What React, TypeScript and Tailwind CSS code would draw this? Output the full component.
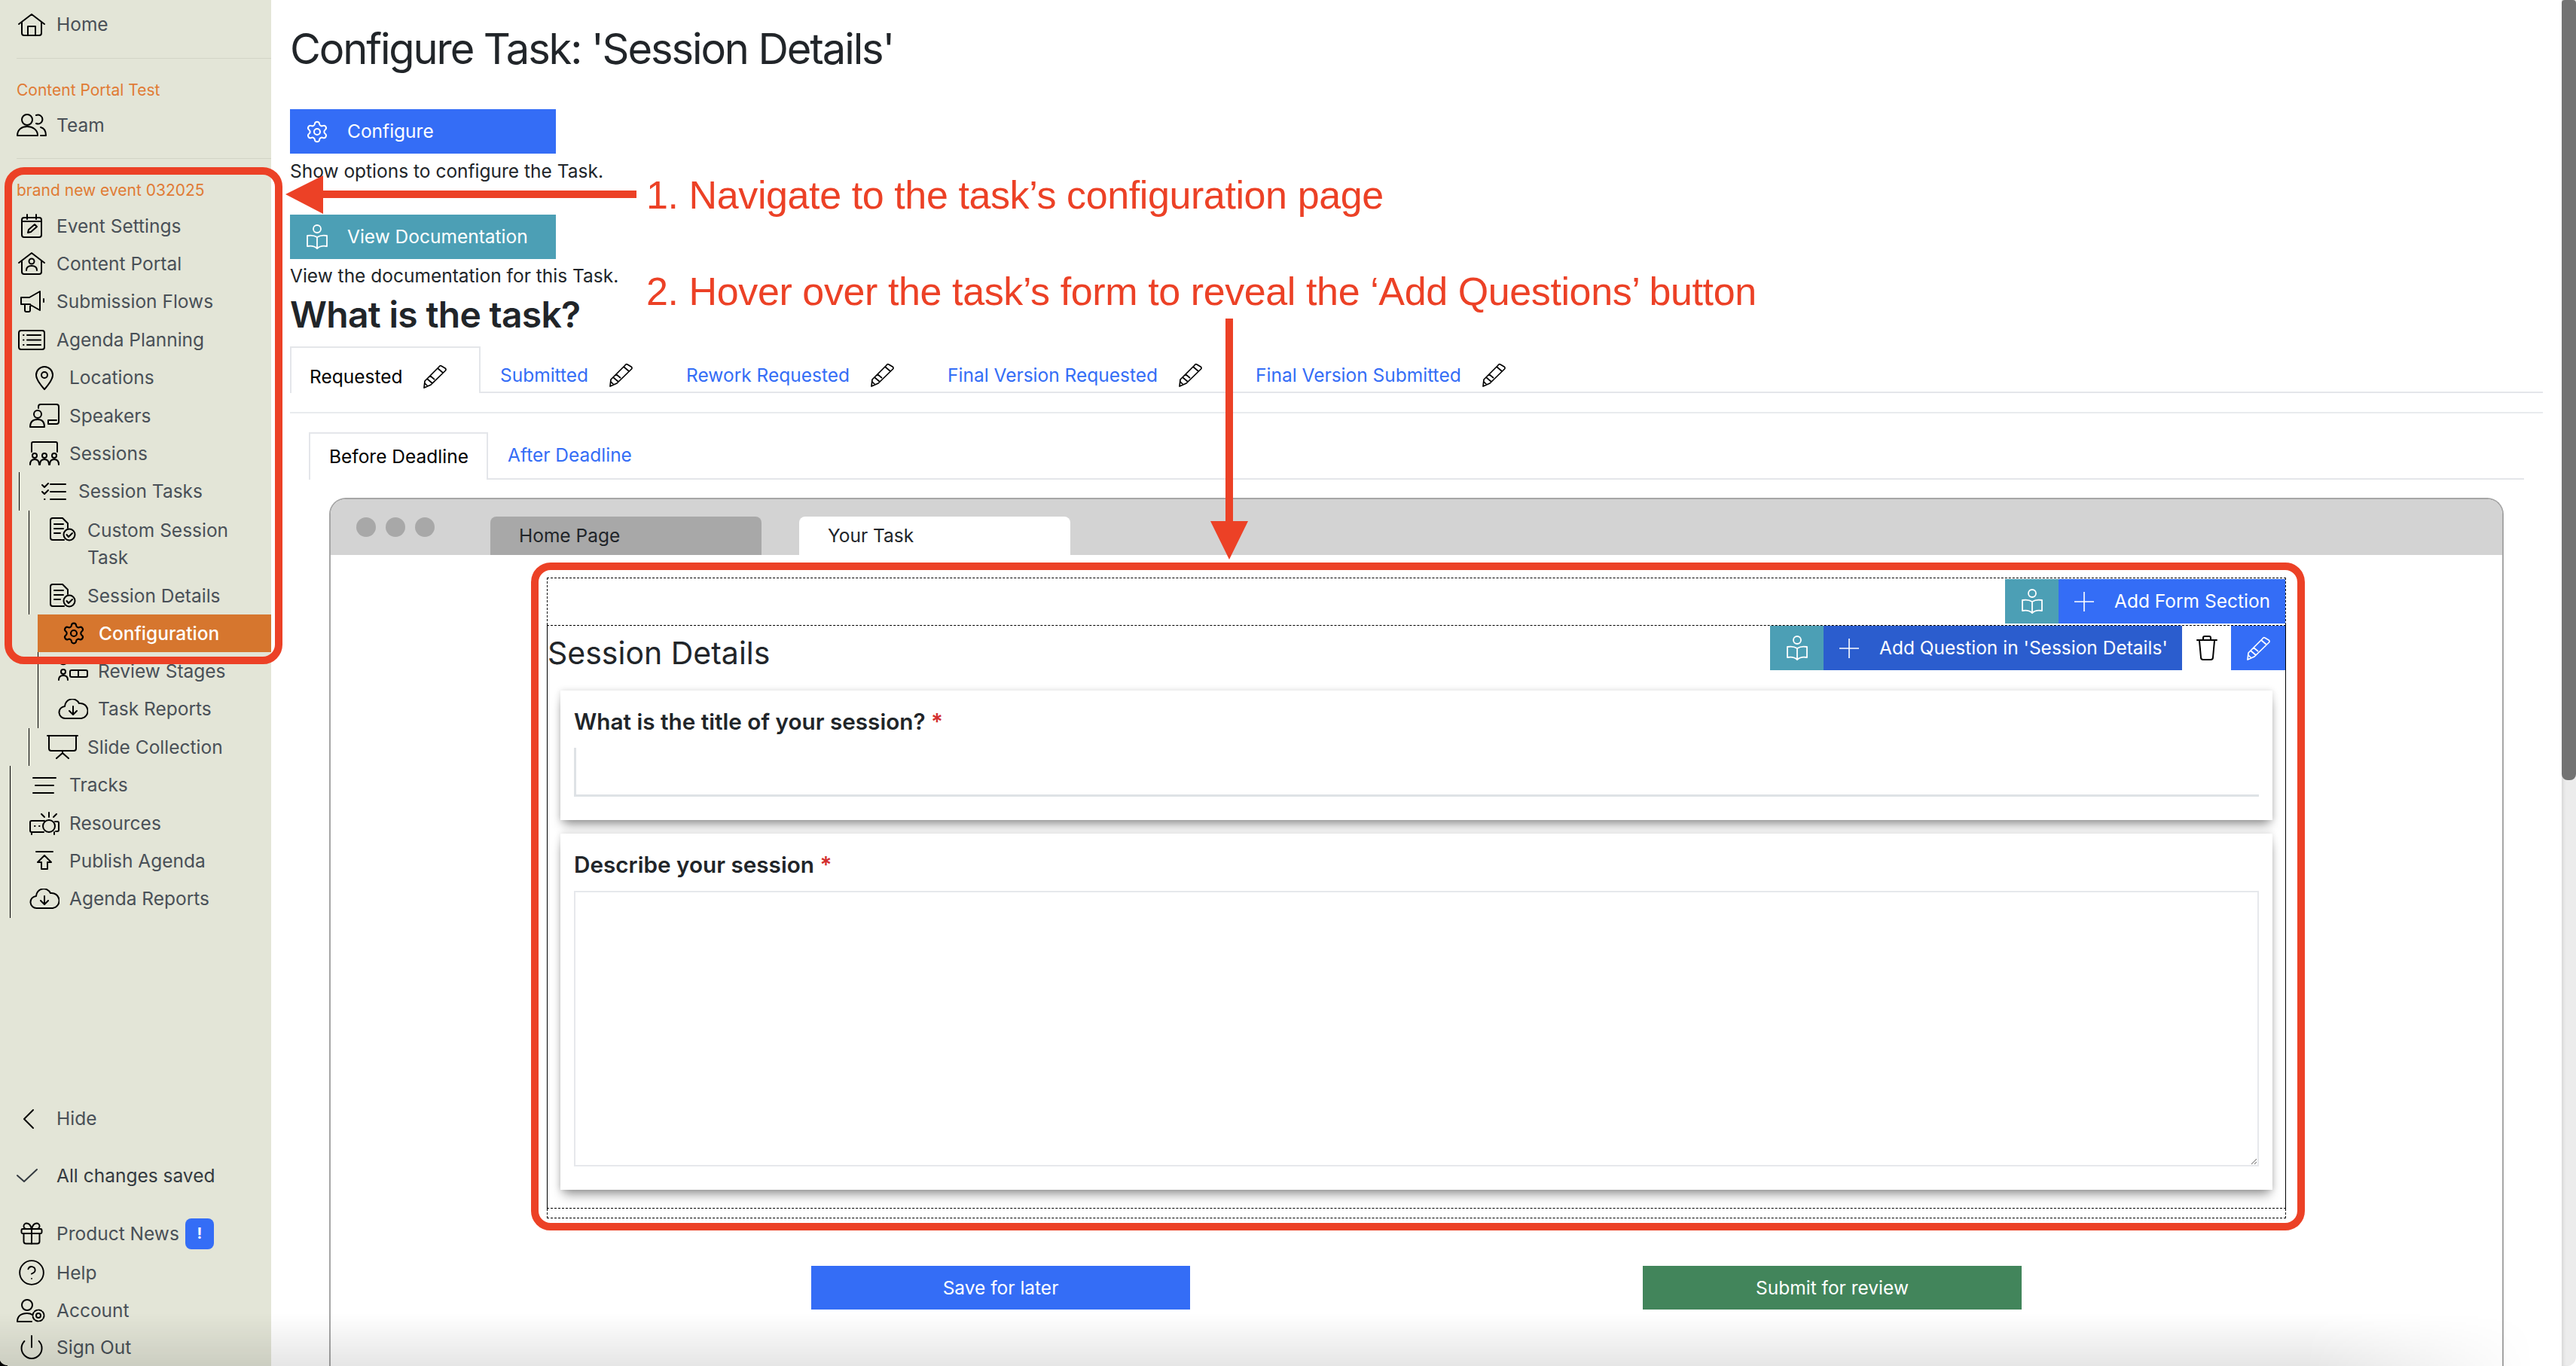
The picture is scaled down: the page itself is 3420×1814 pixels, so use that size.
import type { ReactNode } from 'react';
import { CircleHelp, Gift, Power, Settings } from 'lucide-react';

const INK = 'stroke-current fill-none';

function Svg({ w, h, children, className = '' }: { w: number; h: number; children: ReactNode; className?: string }) {
    return (
        <svg width={w} height={h} viewBox={`0 0 ${w} ${h}`} strokeWidth={2} strokeLinecap="round" strokeLinejoin="round" className={`${INK} shrink-0 ${className}`}>
            {children}
        </svg>
    );
}

const HomeIcon = () => (
    <Svg w={36} h={32}>
        <path d="M1 15 18 2l17 13M5 12v15a3 3 0 0 0 3 3h20a3 3 0 0 0 3-3V12M13 30V18h10v12" />
    </Svg>
);
const TeamIcon = () => (
    <Svg w={40} h={31}>
        <circle cx="14" cy="8" r="7" />
        <path d="M26 2a6 6 0 1 1 0 11M1 29c0-8 6-12 13-12s14 4 14 12zM32 18c4 1 7 5 7 11h-7" />
    </Svg>
);
const CalendarIcon = () => (
    <Svg w={28} h={32}>
        <rect x="1" y="5" width="26" height="26" rx="3" />
        <path d="M8 1v6M20 1v6M1 10h26M9 25l1-4 8-7 3 3-8 7z" />
    </Svg>
);
const PortalIcon = () => (
    <Svg w={36} h={32}>
        <path d="M1 15 18 2l17 13M5 12v15a3 3 0 0 0 3 3h20a3 3 0 0 0 3-3V12M11 25c0-4 3-6 7-6s7 2 7 6" />
        <circle cx="18" cy="13" r="3.5" />
    </Svg>
);
const MegaphoneIcon = () => (
    <Svg w={33} h={31}>
        <path d="M2 10h11L27 2v25l-14-8H2zM7 19v8a2 2 0 0 0 2 2h3a2 2 0 0 0 2-2v-8M32 12v4" />
    </Svg>
);
const AgendaIcon = () => (
    <Svg w={36} h={27}>
        <rect x="1" y="1" width="34" height="25" rx="3" />
        <path d="M7 7h.5M7 13.5h.5M7 20h.5M12 7h18M12 13.5h18M12 20h18" />
    </Svg>
);
const PinIcon = () => (
    <Svg w={24} h={32}>
        <path d="M12 31C4 22 1 17 1 12a11 11 0 0 1 22 0c0 5-3 10-11 19z" />
        <circle cx="12" cy="12" r="4" />
    </Svg>
);
const SpeakersIcon = () => (
    <Svg w={40} h={32}>
        <path d="M12 6V4a3 3 0 0 1 3-3h21a3 3 0 0 1 3 3v20a3 3 0 0 1-3 3H25v-5h11" />
        <circle cx="11" cy="14" r="5" />
        <path d="M1 31c0-7 4-10 10-10s9 3 9 10z" />
    </Svg>
);
const SessionsIcon = () => (
    <Svg w={40} h={32}>
        <path d="M3 14V3a2 2 0 0 1 2-2h30a2 2 0 0 1 2 2v11" />
        <circle cx="7" cy="19" r="3" />
        <circle cx="20" cy="19" r="3" />
        <circle cx="33" cy="19" r="3" />
        <path d="M1 31c0-4 2-7 6-7s6 3 6 7M14 31c0-4 2-7 6-7s6 3 6 7M27 31c0-4 2-7 6-7s6 3 6 7" />
    </Svg>
);
const ChecklistIcon = () => (
    <Svg w={33} h={26}>
        <path d="m1 4 3 3 5-5M1 13l3 3 5-5M4 23h.5M12 3h20M12 13h20M12 23h20" />
    </Svg>
);
const FormCheckIcon = () => (
    <Svg w={36} h={32}>
        <path d="M20 30H5a3 3 0 0 1-3-3V4a3 3 0 0 1 3-3h13l7 7v6M7 9h12M7 15h12M7 21h8" />
        <circle cx="27" cy="23" r="7.5" />
        <path d="m23.5 23 2.5 3 5-5" />
    </Svg>
);
const ReviewIcon = () => (
    <Svg w={40} h={26}>
        <circle cx="7" cy="14" r="3" />
        <path d="M1 25c0-4 2-6 6-6s6 2 6 6M3 2c1 3 7 3 8 0" />
        <rect x="16" y="12" width="23" height="9" rx="2" />
        <path d="M27 12v9M16 1h22" />
    </Svg>
);
const CloudIcon = () => (
    <Svg w={40} h={28}>
        <path d="M10 26a8 8 0 0 1-1-16 10 10 0 0 1 19-4 9 9 0 0 1 3 20zM20 10v10M15 16l5 5 5-5" />
    </Svg>
);
const SlideIcon = () => (
    <Svg w={42} h={32}>
        <path d="M1 1h40M3 1v17a3 3 0 0 0 3 3h30a3 3 0 0 0 3-3V1M21 21v3M13 31l8-7 8 7" />
    </Svg>
);
const TracksIcon = () => (
    <Svg w={32} h={22}>
        <path d="M1 1h30M4 11h24M1 21h27" />
    </Svg>
);
const ResourcesIcon = () => (
    <Svg w={40} h={31}>
        <path d="M20 12H3a2 2 0 0 0-2 2v11a2 2 0 0 0 2 2h16M3 27v3M33 27v3M34 13h3a2 2 0 0 1 2 2v9a2 2 0 0 1-2 2h-2M7 19h.5M13 19h.5M26 1v6M16 3l4 4M36 3l-4 4" />
        <circle cx="26" cy="19" r="8" />
    </Svg>
);
const PublishIcon = () => (
    <Svg w={24} h={26}>
        <path d="M1 1h22M12 6l-9 9h5v9h8v-9h5z" />
    </Svg>
);
const AccountIcon = () => (
    <Svg w={40} h={32}>
        <circle cx="14" cy="9" r="7" />
        <path d="M1 31c0-7 5-11 13-11 3 0 5 .5 7 2M1 31h19" />
        <circle cx="29" cy="23" r="3" />
        <circle cx="29" cy="23" r="7.5" strokeDasharray="4 1.9" />
    </Svg>
);
const PlusIcon = () => (
    <svg width="26" height="26" viewBox="0 0 26 26" className="shrink-0 fill-none stroke-white" strokeWidth={1.6}>
        <path d="M13 0v26M0 13h26" />
    </svg>
);
const BookIcon = () => (
    <svg width="32" height="33" viewBox="0 0 32 33" className="shrink-0 fill-none stroke-white" strokeWidth={1.8} strokeLinejoin="round">
        <circle cx="16" cy="6" r="5" />
        <path d="M16 17c-3-2-8-3-13-2v14c5-1 10 0 13 3 3-3 8-4 13-3V15c-5-1-10 0-13 2zM16 17v15" />
    </svg>
);
function PencilIcon({ tone = 'stroke-black' }: { tone?: string }) {
    return (
        <svg width="32" height="32" viewBox="0 0 32 32" className={`shrink-0 fill-none ${tone}`} strokeWidth={1.7} strokeLinejoin="round">
            <path d="m25 2 5 3a2 2 0 0 1 .5 3L11 27l-9 4 1-9L22 3a2 2 0 0 1 3-1zM20 5l7 6M6 19l7 6M3 25l4 4M10 15l6 5" />
        </svg>
    );
}
const TrashIcon = () => (
    <svg width="28" height="33" viewBox="0 0 28 33" className="shrink-0 fill-none stroke-black" strokeWidth={2} strokeLinejoin="round" strokeLinecap="round">
        <path d="M1 6h26M9 6V3a2 2 0 0 1 2-2h6a2 2 0 0 1 2 2v3M4 7l2 22a3 3 0 0 0 3 3h10a3 3 0 0 0 3-3l2-22" />
    </svg>
);

function NavRow({ icon, label, className = '' }: { icon: ReactNode; label: ReactNode; className?: string }) {
    return (
        <div className={`flex h-[50.4px] items-center text-[24.5px] text-[#495057] ${className}`}>
            <span className="flex w-[66px] shrink-0 justify-center text-black">{icon}</span>
            <span>{label}</span>
        </div>
    );
}

function Sidebar() {
    return (
        <aside className="flex h-[1814px] w-[360px] shrink-0 flex-col overflow-hidden bg-[#e3e5d7]">
            <NavRow className="mt-[8px] pl-[9px]" icon={<HomeIcon />} label="Home" />
            <div className="ml-[22px] mt-[20px] h-[1px] bg-[#d2d4c6]" />
            <div className="ml-[22px] mt-[29px] text-[21px] leading-[26px] text-[#e07b35]">Content Portal Test</div>
            <NavRow className="mt-[8px] pl-[9px]" icon={<TeamIcon />} label="Team" />
            <div className="ml-[22px] mt-[19px] h-[1px] bg-[#d2d4c6]" />
            <div className="ml-[22px] mt-[29px] text-[21px] leading-[26px] text-[#e07b35]">brand new event 032025</div>
            <div className="mt-[9px]">
                <NavRow className="pl-[9px]" icon={<CalendarIcon />} label="Event Settings" />
                <NavRow className="pl-[9px]" icon={<PortalIcon />} label="Content Portal" />
                <NavRow className="pl-[9px]" icon={<MegaphoneIcon />} label="Submission Flows" />
                <NavRow className="pl-[9px]" icon={<AgendaIcon />} label="Agenda Planning" />
                <NavRow className="pl-[26px]" icon={<PinIcon />} label="Locations" />
                <NavRow className="pl-[26px]" icon={<SpeakersIcon />} label="Speakers" />
                <NavRow className="pl-[26px]" icon={<SessionsIcon />} label="Sessions" />
                <NavRow className="ml-[25px] border-l border-black pl-[12px]" icon={<ChecklistIcon />} label="Session Tasks" />
                <div className="ml-[38px] border-l border-black pl-[11px]">
                    <div className="flex items-start pb-[8px] pt-[8px] text-[24.5px] leading-[36px] text-[#495057]">
                        <span className="flex w-[66px] shrink-0 justify-center pt-[1px] text-black"><FormCheckIcon /></span>
                        <span>Custom Session<br />Task</span>
                    </div>
                    <NavRow icon={<FormCheckIcon />} label="Session Details" />
                </div>
                <div className="ml-[50px] flex h-[50px] items-center bg-[#d6762e] pl-[15px] text-[24.5px] font-medium text-white">
                    <span className="flex w-[66px] shrink-0 justify-center text-black"><Settings size={32} strokeWidth={1.6} /></span>
                    <span>Configuration</span>
                </div>
                <div className="ml-[50px] border-l border-black pl-[13px]">
                    <NavRow icon={<ReviewIcon />} label="Review Stages" />
                    <NavRow icon={<CloudIcon />} label="Task Reports" />
                </div>
                <NavRow className="ml-[38px] border-l border-black pl-[11px]" icon={<SlideIcon />} label="Slide Collection" />
                <div className="ml-[13px] border-l border-black pl-[12px]">
                    <NavRow icon={<TracksIcon />} label="Tracks" />
                    <NavRow icon={<ResourcesIcon />} label="Resources" />
                    <NavRow icon={<PublishIcon />} label="Publish Agenda" />
                    <NavRow icon={<CloudIcon />} label="Agenda Reports" />
                </div>
            </div>
            <NavRow
                className="mt-[242px] pl-[9px]"
                icon={
                    <Svg w={16} h={28} className="-ml-[8px]">
                        <path d="M14 2 2 14l12 12" />
                    </Svg>
                }
                label="Hide"
            />
            <div className="mt-[26px] flex h-[50px] items-center pl-[9px] text-[24.5px] text-[#343a40]">
                <span className="flex w-[66px] shrink-0 justify-center text-[#343a40]">
                    <Svg w={30} h={20} className="-ml-[12px]">
                        <path d="m2 10 9 8L28 2" />
                    </Svg>
                </span>
                <span>All changes saved</span>
            </div>
            <NavRow
                className="mt-[28px] pl-[9px]"
                icon={<Gift size={36} strokeWidth={1.3} />}
                label={
                    <span className="flex items-center gap-[8px]">
                        Product News
                        <span className="flex h-[41px] w-[38px] items-center justify-center rounded-[8px] bg-[#346df6] text-[20px] font-bold text-white">!</span>
                    </span>
                }
            />
            <NavRow className="mt-[3px] pl-[9px]" icon={<CircleHelp size={38} strokeWidth={1.2} />} label="Help" />
            <NavRow className="pl-[9px]" icon={<AccountIcon />} label="Account" />
            <NavRow className="pl-[9px]" icon={<Power size={36} strokeWidth={1.3} />} label="Sign Out" />
        </aside>
    );
}

const TASK_TABS = ['Submitted', 'Rework Requested', 'Final Version Requested', 'Final Version Submitted'];

function TaskTabs() {
    return (
        <div className="mt-[12px] flex h-[62px] border-b-2 border-[#e4e6ea]">
            <div className="-mb-[2px] flex h-[62px] w-[253px] items-center gap-[27px] border-x-2 border-t-2 border-[#e4e6ea] bg-white pl-[24px] pt-[16px] text-black">
                Requested
                <PencilIcon />
            </div>
            {TASK_TABS.map((t) => (
                <div key={t} className="flex items-center gap-[27px] pl-[26px] pr-[45px] pt-[16px] text-[#346df6]">
                    {t}
                    <PencilIcon />
                </div>
            ))}
        </div>
    );
}

function FormBuilder() {
    return (
        <div className="mx-[287px] mt-[30px]">
            <div className="flex h-[63px] justify-end border-x border-t border-dashed border-black pt-[1px]">
                <div className="flex h-[59px] w-[71px] items-center justify-center bg-[#4c9fb5]"><BookIcon /></div>
                <div className="flex h-[59px] w-[301px] items-center gap-[27px] bg-[#346df6] pl-[21px] text-white">
                    <PlusIcon />
                    Add Form Section
                </div>
            </div>
            <div className="h-[775px] border-x border-y border-black [border-bottom-style:dashed] [border-top-style:dashed]">
                <div className="flex h-[86px] items-start justify-between">
                    <h3 className="mt-[6px] text-[41px] leading-[60px] text-[#212529]">Session Details</h3>
                    <div className="flex h-[59px]">
                        <div className="flex w-[71px] items-center justify-center bg-[#4c9fb5]"><BookIcon /></div>
                        <div className="flex w-[476px] items-center gap-[27px] bg-[#2b5dce] pl-[21px] text-white">
                            <PlusIcon />
                            Add Question in 'Session Details'
                        </div>
                        <div className="flex w-[65px] items-center justify-center bg-white"><TrashIcon /></div>
                        <div className="flex w-[72px] items-center justify-center bg-[#346df6]"><PencilIcon tone="stroke-white" /></div>
                    </div>
                </div>
                <div className="mx-[17px] h-[172px] bg-white px-[18px] pt-[22px] shadow-[0_10px_14px_-4px_rgba(0,0,0,0.4),0_0_8px_rgba(0,0,0,0.15)]">
                    <label className="block text-[29.7px] font-semibold leading-[38px] text-[#212529]">
                        What is the title of your session? <span className="text-[#d32f2f]">*</span>
                    </label>
                    <input className="mt-[16px] block h-[65px] w-full border-b-[3px] border-l-[3px] border-[#dee2e6] bg-white" />
                </div>
                <div className="mx-[17px] mt-[18px] h-[473px] bg-white px-[18px] pt-[22px] shadow-[0_10px_14px_-4px_rgba(0,0,0,0.4),0_0_8px_rgba(0,0,0,0.15)]">
                    <label className="block text-[29.7px] font-semibold leading-[38px] text-[#212529]">
                        Describe your session <span className="text-[#d32f2f]">*</span>
                    </label>
                    <textarea className="mt-[16px] block h-[366px] w-full border-2 border-[#e6e8ec] bg-white" />
                </div>
            </div>
            <div className="h-[13px] border-x border-b border-dashed border-black" />
        </div>
    );
}

function Content() {
    return (
        <main className="min-w-0 flex-1 pl-[25px] pr-[25px] text-[24.5px] text-[#212529]">
            <h1 className="h-[100px] pt-[30px] text-[56px] leading-[70px] tracking-[-2.1px]">Configure Task: 'Session Details'</h1>
            <div className="mt-[45px] flex h-[59px] w-[353px] items-center gap-[24px] bg-[#346df6] pl-[20px] text-white">
                <Settings size={32} strokeWidth={1.5} />
                Configure
            </div>
            <p className="h-[81px] pt-[6px] leading-[34px]">Show options to configure the Task.</p>
            <div className="flex h-[59px] w-[353px] items-center gap-[24px] bg-[#4c9fb5] pl-[20px] text-white">
                <BookIcon />
                View Documentation
            </div>
            <p className="h-[44px] pt-[5px] leading-[34px]">View the documentation for this Task.</p>
            <h2 className="text-[48px] font-semibold leading-[60px] tracking-[-0.7px]">What is the task?</h2>
            <TaskTabs />
            <div className="mt-[25px] h-[2px] bg-[#e9ebee]" />
            <div className="mx-[25px] mt-[25px] flex h-[63px] border-b-2 border-[#e4e6ea]">
                <div className="-mb-[2px] flex h-[63px] w-[238px] items-center border-x-2 border-t-2 border-[#e4e6ea] bg-white pl-[25px] text-black">Before Deadline</div>
                <div className="flex items-center pl-[26px] text-[#346df6]">After Deadline</div>
            </div>
            <div className="mx-[52px] mt-[24px] h-[1200px] rounded-t-[22px] border-x-2 border-t-2 border-[#a6a6a6]">
                <div className="flex h-[74px] items-end rounded-t-[20px] bg-[#d3d3d3]">
                    <div className="flex gap-[13px] self-start pl-[34px] pt-[24px]">
                        <span className="h-[26px] w-[26px] rounded-full bg-[#a8a8a8]" />
                        <span className="h-[26px] w-[26px] rounded-full bg-[#a8a8a8]" />
                        <span className="h-[26px] w-[26px] rounded-full bg-[#a8a8a8]" />
                    </div>
                    <div className="ml-[74px] flex h-[51px] w-[360px] items-center rounded-t-[8px] bg-[#a8a8a8] pl-[38px] text-[#212529]">Home Page</div>
                    <div className="ml-[50px] flex h-[51px] w-[360px] items-center rounded-t-[8px] bg-white pl-[38px] text-[#212529]">Your Task</div>
                </div>
                <FormBuilder />
                <div className="mt-[63px] flex justify-center gap-[601px]">
                    <div className="flex h-[58px] w-[503px] items-center justify-center bg-[#346df6] text-white">Save for later</div>
                    <div className="flex h-[58px] w-[503px] items-center justify-center bg-[#42855b] text-white">Submit for review</div>
                </div>
            </div>
        </main>
    );
}

// Callouts drawn over the screenshot
function Annotations() {
    const text = "absolute whitespace-nowrap text-[52px] leading-[60px] tracking-[-0.4px] text-[#ec4126] [font-family:'Liberation_Sans',Arial,sans-serif]";
    return (
        <>
            <div className="absolute left-[6px] top-[222px] h-[660px] w-[369px] rounded-[26px] border-[10px] border-[#ec4126]" />
            <div className="absolute left-[705px] top-[747px] h-[887px] w-[2355px] rounded-[26px] border-[10px] border-[#ec4126]" />
            <svg className="absolute left-[375px] top-[230px] fill-[#ec4126]" width="480" height="60" viewBox="0 0 480 60">
                <path d="M4 28 54 3v20h416v10H54v21z" />
            </svg>
            <svg className="absolute left-[1600px] top-[420px] fill-[#ec4126]" width="64" height="330" viewBox="0 0 64 330">
                <path d="M27 3h10v269h20l-25 51-25-51h20z" />
            </svg>
            <div className={`${text} left-[858px] top-[229px]`}>1. Navigate to the task’s configuration page</div>
            <div className={`${text} left-[858px] top-[357px]`}>2. Hover over the task’s form to reveal the ‘Add Questions’ button</div>
        </>
    );
}

export default function App() {
    return (
        <div className="relative flex h-[1814px] w-[3420px] overflow-hidden bg-white [font-family:Inter,sans-serif]">
            <Sidebar />
            <Content />
            <div className="flex w-[19px] shrink-0 flex-col overflow-hidden rounded-br-[12px] bg-[#ececec] shadow-[inset_4px_0_4px_-2px_rgba(0,0,0,0.1)]">
                <div className="h-[1036px] rounded-b-[8px] rounded-t-[4px] bg-[#737373]" />
            </div>
            <Annotations />
            <div className="pointer-events-none absolute bottom-0 left-0 h-[70px] w-[3400px] bg-gradient-to-b from-black/0 to-black/10 [mask-image:linear-gradient(to_right,black_90%,transparent_99%)]" />
            <div className="absolute bottom-0 left-0 h-[12px] w-[10px] bg-[radial-gradient(circle_at_100%_0%,transparent_68%,black_74%)]" />
        </div>
    );
}
